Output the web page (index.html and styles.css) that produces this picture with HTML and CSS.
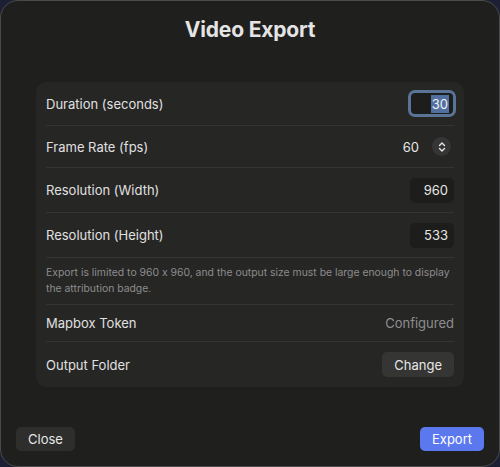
FILE: index.html
```html
<!DOCTYPE html>
<html>
<head>
<meta charset="utf-8">
<link rel="stylesheet" href="styles.css">
</head>
<body>
<div class="window">
  <h1 class="title">Video Export</h1>
  <div class="card">
    <div class="row row-duration">
      <span class="label">Duration (seconds)</span>
      <div class="field field-focus"><span class="sel">30</span></div>
    </div>
    <div class="row row-fps">
      <span class="label">Frame Rate (fps)</span>
      <div class="picker">
        <span class="value">60</span>
        <span class="stepper">
          <svg width="10" height="12" viewBox="0 0 10 12"><path d="M2.5 4.5 L5 2 L7.5 4.5 M2.5 7.5 L5 10 L7.5 7.5" fill="none" stroke="#e6e6e6" stroke-width="1.4" stroke-linecap="round" stroke-linejoin="round"/></svg>
        </span>
      </div>
    </div>
    <div class="row row-field">
      <span class="label">Resolution (Width)</span>
      <div class="field">960</div>
    </div>
    <div class="row row-field">
      <span class="label">Resolution (Height)</span>
      <div class="field">533</div>
    </div>
    <div class="row row-note">
      <p class="note">Export is limited to 960 x 960, and the output size must be large enough to display the attribution badge.</p>
    </div>
    <div class="row row-token">
      <span class="label">Mapbox Token</span>
      <span class="muted">Configured</span>
    </div>
    <div class="row row-folder">
      <span class="label">Output Folder</span>
      <button class="btn">Change</button>
    </div>
  </div>
  <div class="footer">
    <button class="btn btn-close">Close</button>
    <button class="btn btn-primary">Export</button>
  </div>
</div>
</body>
</html>
```

FILE: styles.css
```css
html, body {
  margin: 0;
  padding: 0;
  background: #1d1f35;
  width: 500px;
  height: 467px;
  overflow: hidden;
}
body {
  font-family: Inter, "Noto Sans", sans-serif;
  font-feature-settings: "calt" 0;
  color: #e2e2e2;
}
.window {
  box-sizing: border-box;
  width: 500px;
  height: 467px;
  background: #1f1f1e;
  border: 1px solid #4b4b4b;
  border-radius: 18px;
  display: flex;
  flex-direction: column;
  padding: 0 15px 15px 15px;
}
.title {
  margin: 15px 0 0 0;
  font-size: 21px;
  line-height: 28px;
  font-weight: 700;
  text-align: center;
  color: #e4e4e4;
  letter-spacing: -0.2px;
}
.card {
  margin: 38px 20px 0 20px;
  background: #262625;
  border-radius: 10px;
  display: flex;
  flex-direction: column;
}
.row {
  margin: 0 10px;
  display: flex;
  align-items: center;
  justify-content: space-between;
  border-bottom: 1px solid #353534;
  box-sizing: border-box;
}
.row:last-child {
  border-bottom: none;
}
.row-duration { height: 44px; }
.row-fps { height: 42px; }
.row-field { height: 45px; }
.row-note { height: 47px; }
.row-token { height: 37px; }
.row-folder { height: 45px; }
.label {
  font-size: 13px;
  color: #e0e0e0;
}
.field {
  box-sizing: border-box;
  width: 44px;
  height: 25px;
  background: #1d1d1c;
  border-radius: 5px;
  font-size: 13px;
  color: #e6e6e6;
  display: flex;
  align-items: center;
  justify-content: flex-end;
  padding-right: 6px;
}
.field-focus {
  width: 48px;
  height: 27px;
  border: 3px solid #5a7498;
  border-radius: 7px;
  margin-right: -2px;
  padding-right: 4px;
}
.sel {
  background: #5170a0;
  color: #f0f0f0;
  line-height: 18px;
  padding: 0 1px;
}
.picker {
  display: flex;
  align-items: center;
  gap: 13px;
}
.value {
  font-size: 13px;
  color: #e6e6e6;
}
.stepper {
  width: 19px;
  height: 19px;
  border-radius: 50%;
  background: #353535;
  display: flex;
  align-items: center;
  justify-content: center;
  margin-right: 3px;
}
.note {
  margin: 0;
  font-size: 10.4px;
  line-height: 16px;
  color: #8d8d8d;
}
.muted {
  font-size: 13px;
  color: #8e8e8e;
}
.btn {
  font-family: Inter, "Noto Sans", sans-serif;
  font-size: 13px;
  color: #e6e6e6;
  background: #353534;
  border: none;
  border-radius: 5px;
  height: 25px;
  padding: 0 12px;
  margin: 0;
}
.footer {
  margin-top: auto;
  display: flex;
  justify-content: space-between;
  align-items: center;
}
.btn-close {
  background: #2e2e2d;
  width: 59px;
  padding: 0;
  height: 24px;
}
.btn-primary {
  background: #5b78ef;
  color: #ffffff;
  width: 64px;
  padding: 0;
  height: 24px;
}
```
